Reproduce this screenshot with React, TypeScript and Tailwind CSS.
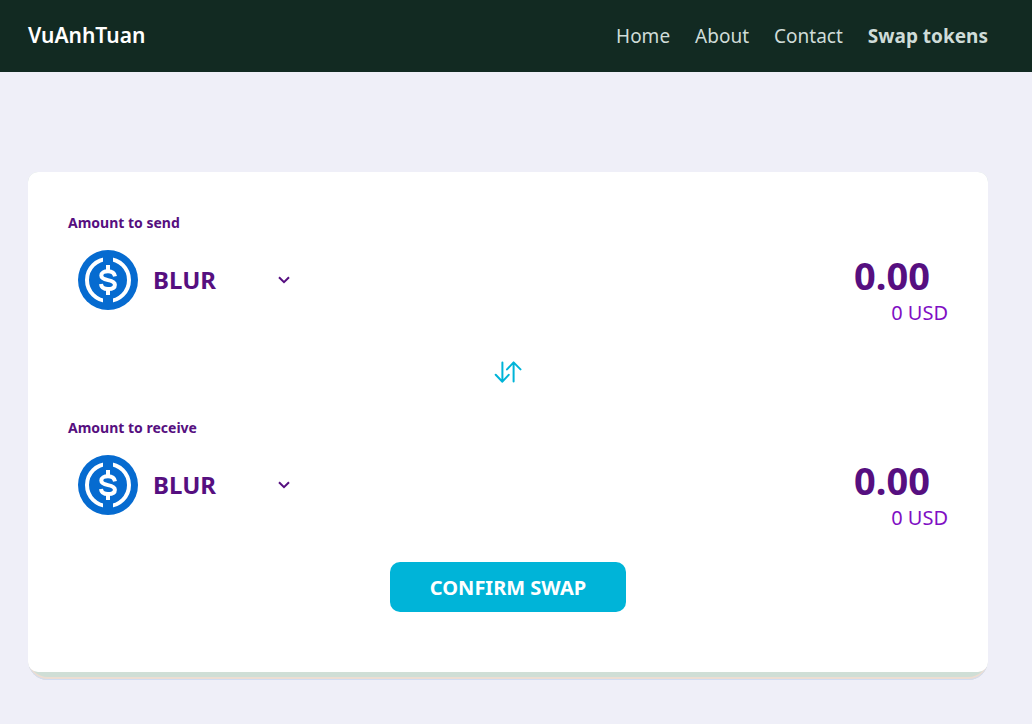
import { useState } from "react";

const links = ["Home", "About", "Contact"];
const tokens = ["BLUR", "ETH", "USDC"];

function CoinIcon() {
  return (
    <svg viewBox="0 0 60 60" className="size-[60px] shrink-0" aria-hidden="true">
      <circle cx="30" cy="30" r="30" fill="#066bd0" />
      <circle cx="30" cy="30" r="21" fill="none" stroke="#fff" strokeWidth="4" />
      <path d="M25 5h10v50H25z" fill="#066bd0" />
      <g fill="none" stroke="#fff" strokeWidth="4">
        <path d="M30 15v5M30 40v5" />
        <path d="M37 26.4C36.4 23 34 21.3 30 21.3C26 21.3 23.3 23 23.3 25.6C23.3 28.4 25.6 29.3 30 30.1C34.6 30.9 36.9 31.9 36.9 34.8C36.9 37.5 34.2 39.1 30 39.1C25.8 39.1 23.3 37.2 23 34" />
      </g>
    </svg>
  );
}

function SwapIcon() {
  return (
    <svg
      viewBox="0 0 28 24"
      className="h-6 w-7"
      fill="none"
      stroke="#00b4d8"
      strokeWidth="2"
      strokeLinecap="round"
      strokeLinejoin="round"
      aria-hidden="true"
    >
      <path d="M8.4 2.5v19M1.7 14.8l6.7 6.9 6.3-6.9" />
      <path d="M19.6 21.5v-19M13 9.4l6.6-7 6.9 7" />
    </svg>
  );
}

function AmountRow({ id, label }: { id: string; label: string }) {
  const [amount, setAmount] = useState("0.00");
  return (
    <section>
      <label htmlFor={id} className="block pt-px text-[14px] leading-5 font-bold text-[#560f80]">
        {label}
      </label>
      <div className="mt-[7px] flex items-start justify-between">
        <div className="flex h-20 items-center pl-[10px]">
          <CoinIcon />
          <div className="relative w-[160px]">
            <select
              aria-label={`${label} token`}
              className="h-10 w-full appearance-none bg-transparent pl-[15px] text-[24px] font-bold text-[#560f80] outline-none"
            >
              {tokens.map((t) => (
                <option key={t}>{t}</option>
              ))}
            </select>
            <svg
              viewBox="0 0 12 8"
              className="pointer-events-none absolute top-4 right-2 h-2 w-3"
              fill="none"
              stroke="#560f80"
              strokeWidth="2"
              aria-hidden="true"
            >
              <path d="M1 1.2l5 5 5-5" />
            </svg>
          </div>
        </div>
        <div className="flex flex-col items-end pt-[15px]">
          <input
            id={id}
            inputMode="decimal"
            value={amount}
            onChange={(e) => setAmount(e.target.value)}
            className="h-10 w-60 bg-transparent pr-[18px] text-right text-[38px] leading-10 font-bold text-[#560f80] outline-none"
          />
          <p className="mt-[6px] text-[20px] leading-6 text-[#7f0fc4]">0 USD</p>
        </div>
      </div>
    </section>
  );
}

export default function App() {
  return (
    <div className="min-h-screen bg-[#efeff8] font-['Noto_Sans','Open_Sans',sans-serif]">
      <header className="flex h-[72px] items-center justify-between bg-[#122a22] pr-11 pl-7">
        <a href="#" className="text-[21px] font-semibold text-white">
          VuAnhTuan
        </a>
        <nav className="flex items-center gap-[25px] text-[19px] text-[#cfdcd8]">
          {links.map((l) => (
            <a key={l} href="#">
              {l}
            </a>
          ))}
          <a href="#" aria-current="page" className="font-bold">
            Swap tokens
          </a>
        </nav>
      </header>
      <main className="pt-[100px] pr-11 pb-11 pl-7">
        <div className="rounded-t-[10px] rounded-b-[20px] bg-[#cfded6] pb-2 shadow-[inset_0_-1px_0_#d0dcf2,inset_0_-3px_0_#ecddd2]">
          <form
            onSubmit={(e) => e.preventDefault()}
            className="flex flex-col rounded-[10px] bg-white px-10 pt-10 pb-[60px]"
          >
            <AmountRow id="send" label="Amount to send" />
            <button type="button" aria-label="Switch tokens" className="mt-[35px] mb-[33px] self-center">
              <SwapIcon />
            </button>
            <AmountRow id="receive" label="Amount to receive" />
            <button
              type="submit"
              className="mt-8 h-[50px] self-center rounded-[10px] bg-[#00b4d8] px-10 pt-[2px] text-[20px] font-bold text-white"
            >
              CONFIRM SWAP
            </button>
          </form>
        </div>
      </main>
    </div>
  );
}
